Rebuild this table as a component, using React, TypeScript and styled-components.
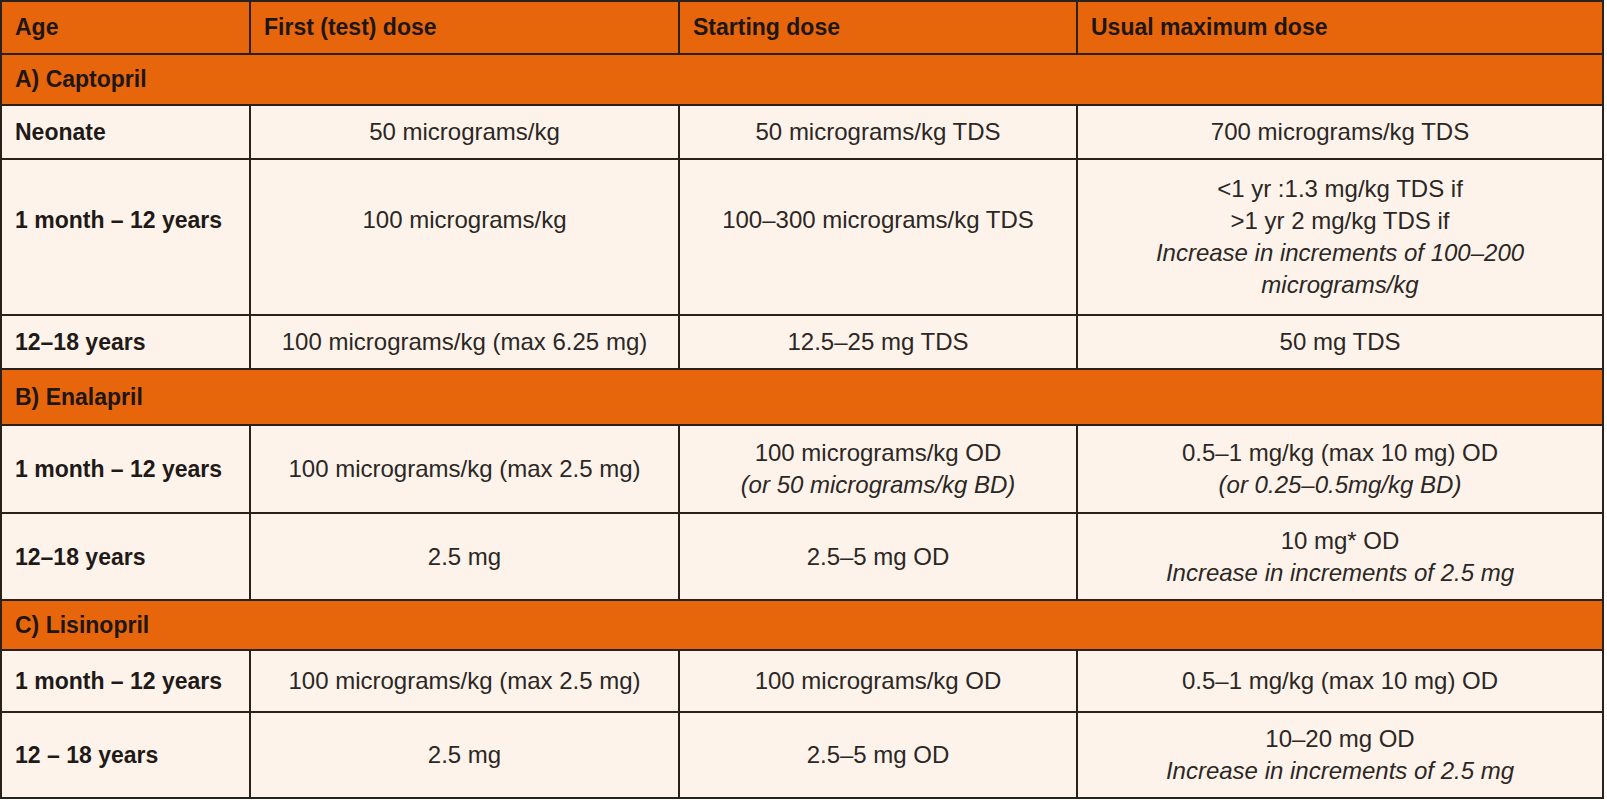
import React from "react";
import styled, { createGlobalStyle, css } from "styled-components";

const GlobalStyle = createGlobalStyle`
  html, body { margin: 0; padding: 0; background: #ffffff; }
  body { font-family: "Liberation Sans", Arial, sans-serif; }
`;

const Table = styled.table`
  border-collapse: collapse;
  width: 1602px;
  table-layout: fixed;
  border: 2px solid #2a211b;
  font-family: "Liberation Sans", Arial, sans-serif;
`;

const Col = styled.col<{ $w: number }>`
  width: ${(p) => p.$w}px;
`;

const Row = styled.tr<{ $h: number }>`
  height: ${(p) => p.$h}px;
`;

const HeadCell = styled.th`
  background: #e8660b;
  color: #1d1612;
  font-weight: 700;
  font-size: 23px;
  text-align: left;
  padding: 0 13px;
  border: 2px solid #2a211b;
  vertical-align: middle;
`;

const SectionCell = styled.td`
  background: #e8660b;
  color: #1d1612;
  font-weight: 700;
  font-size: 23px;
  text-align: left;
  padding: 0 13px;
  border: 2px solid #2a211b;
  vertical-align: middle;
`;

const topAligned = css<{ $top?: number }>`
  ${(p) =>
    p.$top !== undefined
      ? css`
          vertical-align: top;
          padding-top: ${p.$top}px;
        `
      : css`
          vertical-align: middle;
        `}
`;

const AgeCell = styled.td<{ $top?: number }>`
  background: #fdf3ea;
  color: #1f1a17;
  font-weight: 700;
  font-size: 23px;
  line-height: 32px;
  text-align: left;
  padding-left: 13px;
  padding-right: 13px;
  border: 2px solid #2a211b;
  white-space: nowrap;
  ${topAligned}
`;

const DoseCell = styled.td<{ $top?: number }>`
  background: #fdf3ea;
  color: #2b2725;
  font-weight: 400;
  font-size: 24px;
  line-height: 32px;
  text-align: center;
  padding-left: 12px;
  padding-right: 12px;
  border: 2px solid #2a211b;
  ${topAligned}
`;

const Line = styled.div<{ $italic?: boolean }>`
  font-style: ${(p) => (p.$italic ? "italic" : "normal")};
  white-space: nowrap;
`;

type L = { t: string; i?: boolean };
type DataRow = { kind: "data"; h: number; age: string; cells: L[][]; top?: number };
type SecRow = { kind: "section"; h: number; label: string };

const rows: (DataRow | SecRow)[] = [
  { kind: "section", h: 51, label: "A) Captopril" },
  {
    kind: "data",
    h: 54,
    age: "Neonate",
    cells: [
      [{ t: "50 micrograms/kg" }],
      [{ t: "50 micrograms/kg TDS" }],
      [{ t: "700 micrograms/kg TDS" }],
    ],
  },
  {
    kind: "data",
    h: 156,
    age: "1 month – 12 years",
    top: 44,
    cells: [
      [{ t: "100 micrograms/kg" }],
      [{ t: "100–300 micrograms/kg TDS" }],
      [
        { t: "<1 yr :1.3 mg/kg TDS if" },
        { t: ">1 yr 2 mg/kg TDS if" },
        { t: "Increase in increments of 100–200", i: true },
        { t: "micrograms/kg", i: true },
      ],
    ],
  },
  {
    kind: "data",
    h: 54,
    age: "12–18 years",
    cells: [
      [{ t: "100 micrograms/kg (max 6.25 mg)" }],
      [{ t: "12.5–25 mg TDS" }],
      [{ t: "50 mg TDS" }],
    ],
  },
  { kind: "section", h: 56, label: "B) Enalapril" },
  {
    kind: "data",
    h: 88,
    age: "1 month – 12 years",
    cells: [
      [{ t: "100 micrograms/kg (max 2.5 mg)" }],
      [{ t: "100 micrograms/kg OD" }, { t: "(or 50 micrograms/kg BD)", i: true }],
      [{ t: "0.5–1 mg/kg (max 10 mg) OD" }, { t: "(or 0.25–0.5mg/kg BD)", i: true }],
    ],
  },
  {
    kind: "data",
    h: 87,
    age: "12–18 years",
    cells: [
      [{ t: "2.5 mg" }],
      [{ t: "2.5–5 mg OD" }],
      [{ t: "10 mg* OD" }, { t: "Increase in increments of 2.5 mg", i: true }],
    ],
  },
  { kind: "section", h: 50, label: "C) Lisinopril" },
  {
    kind: "data",
    h: 62,
    age: "1 month – 12 years",
    cells: [
      [{ t: "100 micrograms/kg (max 2.5 mg)" }],
      [{ t: "100 micrograms/kg OD" }],
      [{ t: "0.5–1 mg/kg (max 10 mg) OD" }],
    ],
  },
  {
    kind: "data",
    h: 86,
    age: "12 – 18 years",
    cells: [
      [{ t: "2.5 mg" }],
      [{ t: "2.5–5 mg OD" }],
      [{ t: "10–20 mg OD" }, { t: "Increase in increments of 2.5 mg", i: true }],
    ],
  },
];

export default function App() {
  return (
    <>
      <GlobalStyle />
      <Table>
        <colgroup>
          <Col $w={249} />
          <Col $w={429} />
          <Col $w={398} />
          <Col $w={526} />
        </colgroup>
        <thead>
          <Row $h={53}>
            <HeadCell>Age</HeadCell>
            <HeadCell>First (test) dose</HeadCell>
            <HeadCell>Starting dose</HeadCell>
            <HeadCell>Usual maximum dose</HeadCell>
          </Row>
        </thead>
        <tbody>
          {rows.map((r, idx) =>
            r.kind === "section" ? (
              <Row key={idx} $h={r.h}>
                <SectionCell colSpan={4}>{r.label}</SectionCell>
              </Row>
            ) : (
              <Row key={idx} $h={r.h}>
                <AgeCell $top={r.top}>{r.age}</AgeCell>
                {r.cells.map((c, ci) => (
                  <DoseCell key={ci} $top={c.length === 1 ? r.top : undefined}>
                    {c.map((l, li) => (
                      <Line key={li} $italic={l.i}>
                        {l.t}
                      </Line>
                    ))}
                  </DoseCell>
                ))}
              </Row>
            )
          )}
        </tbody>
      </Table>
    </>
  );
}
